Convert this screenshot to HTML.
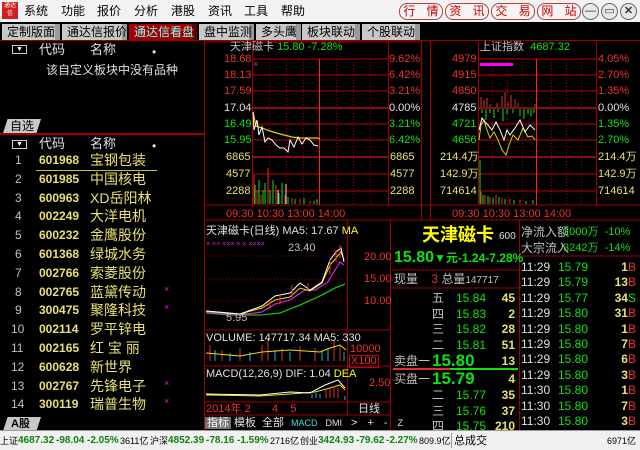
<!DOCTYPE html><html><head><meta charset="utf-8"><style>
*{margin:0;padding:0;box-sizing:border-box}
body{width:640px;height:450px;background:#000;position:relative;overflow:hidden;font-family:"Liberation Sans","Noto Sans CJK SC",sans-serif;font-size:12px}
.a{position:absolute;white-space:nowrap;line-height:1}
.r{color:#f03030}.g{color:#10e010}.w{color:#e0e0e0}.y{color:#e8e070}.yy{color:#ffff00}.gr{color:#c0c0c0}
.tab{position:absolute;top:24px;height:16px;background:#c8c8c8;color:#000;font-size:12px;line-height:16px;padding:0 5px;border-right:5px solid #9a9a9a;white-space:nowrap}
.rb{position:absolute;top:3px;height:17px;border:1px solid #b04040;border-radius:8px;background:#f4f4f4;color:#d00000;font-size:12px;line-height:15px;text-align:center;white-space:nowrap;word-spacing:8px}
.cb{position:absolute;top:3px;width:17px;height:17px;border-radius:50%;border:1px solid #666;background:#e8e8e8;color:#333;font-size:11px;line-height:15px;text-align:center}
.sb{position:absolute;top:4px;line-height:12px;font-size:10px;color:#000;white-space:nowrap}
.sg{position:absolute;top:4px;line-height:12px;font-size:10px;color:#108010;white-space:nowrap;font-weight:bold}
</style></head><body>
<div class="a" style="left:0;top:0;width:640px;height:22px;background:#f2f2f2"></div>
<div class="a" style="left:2px;top:2px;width:16px;height:17px;background:#d02020;color:#fff;font-size:6px;line-height:8px;text-align:center">通达<br>信</div>
<div class="a" style="left:24px;top:5px;color:#000">系统</div>
<div class="a" style="left:61px;top:5px;color:#000">功能</div>
<div class="a" style="left:97px;top:5px;color:#000">报价</div>
<div class="a" style="left:134px;top:5px;color:#000">分析</div>
<div class="a" style="left:171px;top:5px;color:#000">港股</div>
<div class="a" style="left:208px;top:5px;color:#000">资讯</div>
<div class="a" style="left:244px;top:5px;color:#000">工具</div>
<div class="a" style="left:281px;top:5px;color:#000">帮助</div>
<div class="rb" style="left:399px;width:44px">行 情</div>
<div class="rb" style="left:445px;width:44px">资 讯</div>
<div class="rb" style="left:491px;width:44px">交 易</div>
<div class="rb" style="left:537px;width:44px">网 站</div>
<div class="cb" style="left:582px">—</div><div class="cb" style="left:601px">▭</div><div class="cb" style="left:620px;font-weight:bold">✕</div>
<div class="tab" style="left:2px;width:58px">定制版面</div>
<div class="tab" style="left:62px;width:65px">通达信报价</div>
<div class="tab" style="left:129px;width:68px;background:#a00000;color:#80ffff;border-right-color:#600">通达信看盘</div>
<div class="tab" style="left:199px;width:55px">盘中监测</div>
<div class="tab" style="left:256px;width:45px">多头鹰</div>
<div class="tab" style="left:302px;width:58px">板块联动</div>
<div class="tab" style="left:362px;width:58px">个股联动</div>
<div class="a" style="left:0;top:40px;width:640px;height:1px;background:#a00000"></div>
<div class="a" style="left:204px;top:40px;width:1px;height:390px;background:#a00000"></div>
<div class="a" style="left:12px;top:45px;width:15px;height:9px;border:1px solid #ccc;color:#fff;font-size:7px;text-align:center;line-height:8px">▼</div>
<div class="a w" style="left:39px;top:43px;font-size:13px">代码</div>
<div class="a w" style="left:90px;top:43px;font-size:13px">名称</div>
<div class="a w" style="left:152px;top:46px">•</div>
<div class="a w" style="left:46px;top:64px">该自定义板块中没有品种</div>
<div class="a" style="left:3px;top:119px;width:38px;height:14px;background:#c8c8c8;color:#000;font-size:12px;line-height:14px;padding-left:7px;clip-path:polygon(12% 0,100% 0,88% 100%,0 100%)">自选</div>
<div class="a" style="left:0;top:133px;width:204px;height:2px;background:#a00000"></div>
<div class="a" style="left:12px;top:140px;width:15px;height:9px;border:1px solid #ccc;color:#fff;font-size:7px;text-align:center;line-height:8px">▼</div>
<div class="a w" style="left:39px;top:137px;font-size:13px">代码</div>
<div class="a w" style="left:90px;top:137px;font-size:13px">名称</div>
<div class="a w" style="left:152px;top:140px">•</div>
<div class="a" style="left:36px;top:170px;width:121px;height:1px;background:#c0c040"></div>
<div id="list"></div>
<div class="a" style="left:3px;top:417px;width:38px;height:14px;background:#c8c8c8;color:#000;font-size:11px;line-height:14px;padding-left:8px;clip-path:polygon(12% 0,100% 0,88% 100%,0 100%);font-weight:bold">A股</div>
<script>
var L=[["601968","宝钢包装"],["601985","中国核电"],["600963","XD岳阳林"],["002249","大洋电机"],["600232","金鹰股份"],["601368","绿城水务"],["002766","索菱股份"],["002765","蓝黛传动",1],["300475","聚隆科技",1],["002114","罗平锌电"],["002165","红 宝 丽"],["600628","新世界"],["002767","先锋电子",1],["300119","瑞普生物",1]];
var h="";L.forEach(function(r,i){var y=154+i*18.8;h+='<div class="a gr" style="left:'+(i<9?15:11)+'px;top:'+y+'px;font-size:12px">'+(i+1)+'</div><div class="a y" style="left:39px;top:'+y+'px;font-weight:bold;font-size:12px">'+r[0]+'</div><div class="a y" style="left:90px;top:'+(y-1)+'px;font-size:14px">'+r[1]+'</div>'+(r[2]?'<div class="a" style="left:164px;top:'+(y-1)+'px;color:#e020e0;font-size:9px">×</div>':'')});
document.getElementById("list").innerHTML=h;
</script>
<svg class="a" style="left:0;top:0" width="640" height="450">
<g stroke="#a00000" fill="none">
<line x1="205" y1="42" x2="420" y2="42"/><line x1="205" y1="205" x2="640" y2="205"/><line x1="205" y1="220" x2="640" y2="220"/>
<line x1="252.5" y1="42" x2="252.5" y2="205"/><line x1="388.5" y1="42" x2="388.5" y2="205"/><line x1="421.5" y1="40" x2="421.5" y2="220"/><line x1="430.5" y1="40" x2="430.5" y2="220"/>
<line x1="478.5" y1="42" x2="478.5" y2="205"/><line x1="596.5" y1="42" x2="596.5" y2="205"/>
</g>
<g stroke="#c00000">
<line x1="252" y1="59" x2="388" y2="59"/><line x1="252" y1="75" x2="388" y2="75"/><line x1="252" y1="91" x2="388" y2="91"/><line x1="252" y1="108" x2="388" y2="108" stroke="#ff2020"/><line x1="252" y1="124" x2="388" y2="124"/><line x1="252" y1="140" x2="388" y2="140"/><line x1="252" y1="157" x2="388" y2="157" stroke="#ff2020"/><line x1="252" y1="174" x2="388" y2="174"/><line x1="252" y1="191" x2="388" y2="191"/>
<line x1="478" y1="59" x2="596" y2="59"/><line x1="478" y1="75" x2="596" y2="75"/><line x1="478" y1="91" x2="596" y2="91"/><line x1="478" y1="108" x2="596" y2="108" stroke="#ff2020"/><line x1="478" y1="124" x2="596" y2="124"/><line x1="478" y1="140" x2="596" y2="140"/><line x1="478" y1="157" x2="596" y2="157" stroke="#ff2020"/><line x1="478" y1="174" x2="596" y2="174"/><line x1="478" y1="191" x2="596" y2="191"/>
<line x1="319.5" y1="59" x2="319.5" y2="205" stroke="#ff2020"/><line x1="536.5" y1="59" x2="536.5" y2="205" stroke="#ff2020"/>
</g>
<g stroke="#a00000" stroke-dasharray="1,2">
<line x1="269.5" y1="59" x2="269.5" y2="205"/><line x1="286.5" y1="59" x2="286.5" y2="205"/><line x1="303.5" y1="59" x2="303.5" y2="205"/><line x1="336.5" y1="59" x2="336.5" y2="205"/><line x1="353.5" y1="59" x2="353.5" y2="205"/><line x1="370.5" y1="59" x2="370.5" y2="205"/>
<line x1="492.5" y1="59" x2="492.5" y2="205"/><line x1="507.5" y1="59" x2="507.5" y2="205"/><line x1="522.5" y1="59" x2="522.5" y2="205"/><line x1="551.5" y1="59" x2="551.5" y2="205"/><line x1="566.5" y1="59" x2="566.5" y2="205"/><line x1="581.5" y1="59" x2="581.5" y2="205"/>
</g>
<polyline fill="none" stroke="#e0d000" stroke-width="1.2" points="253,112 256,126 262,128 270,131 280,134 292,137 300,138 318,138 320,139"/>
<polyline fill="none" stroke="#fff" points="253,112 254,130 257,120 259,135 262,127 265,142 268,138 272,140 276,145 280,148 284,148 288,152 290,140 294,147 298,137 302,144 306,138 310,140 314,145 318,146"/>
<path stroke="#e03030" d="M254,175V204M257,190V204M261,195V204M268,168V204M276,185V204M285,195V204M292,198V204M300,199V204M310,201V204"/>
<path stroke="#10e010" d="M255,185V204M259,180V204M263,190V204M265,183V204M270,190V204M273,180V204M279,193V204M282,183V204M288,197V204M295,199V204M304,198V204M314,201V204M317,199V204"/>
<path stroke="#ddd" d="M286,184V204M278,190V204"/>
<rect x="480" y="63" width="33" height="3" fill="#f0f"/>
<path stroke="#e03030" d="M481,97V107M484,100V107M487,98V107M490,104V107M497,103V107M502,96V107M505,92V107M508,102V107M511,95V107M515,99V107M518,103V107M535,104V107"/>
<path stroke="#10e010" d="M482,109V113M486,109V120M490,109V113M494,109V118M498,109V112M503,109V121M507,109V114M513,109V113M520,109V116M524,109V119M528,109V114M531,109V116M534,109V113"/>
<polyline fill="none" stroke="#e0d000" points="479,140 481,125 484,120 487,130 490,138 494,132 498,140 502,150 506,155 509,145 513,135 518,140 523,128 528,137 532,136 535,140"/>
<polyline fill="none" stroke="#fff" points="479,130 482,118 485,122 488,125 492,130 496,122 500,130 504,140 507,130 510,135 515,128 520,120 525,132 530,125 535,130"/>
<path stroke="#10e010" d="M480,160V204"/>
<path stroke="#e03030" d="M481,192V204M485,195V204M490,197V204M496,195V204M502,198V204M510,199V204M520,200V204"/>
<path stroke="#10e010" d="M483,195V204M488,196V204M493,198V204M499,197V204M505,199V204M514,200V204M526,201V204M533,200V204"/>
<g stroke="#a00000" fill="none">
<line x1="347.5" y1="220" x2="347.5" y2="415"/><line x1="390.5" y1="220" x2="390.5" y2="430"/><line x1="519.5" y1="220" x2="519.5" y2="430"/>
<line x1="205" y1="330" x2="390" y2="330"/><line x1="205" y1="366" x2="390" y2="366"/><line x1="205" y1="402" x2="390" y2="402"/><line x1="205" y1="415" x2="390" y2="415"/>
<line x1="520" y1="256" x2="640" y2="256"/><line x1="391" y1="270" x2="519" y2="270"/><line x1="391" y1="288" x2="519" y2="288"/>
</g>
<g stroke="#a00000" stroke-dasharray="1,2"><line x1="205" y1="256" x2="347" y2="256"/><line x1="205" y1="279" x2="347" y2="279"/><line x1="205" y1="301" x2="347" y2="301"/></g>
<line x1="393" y1="369" x2="450" y2="369" stroke="#e03030" stroke-width="2"/><line x1="450" y1="369" x2="518" y2="369" stroke="#10e010" stroke-width="2"/>
<polyline fill="none" stroke="#10c010" stroke-width="1.3" points="206,313 230,315 260,315 280,313 300,305 320,296 335,288 345,284"/>
<polyline fill="none" stroke="#e020e0" stroke-width="1.2" points="206,312 240,315 262,312 275,304 290,300 305,290 315,290 328,282 335,270 340,262 344,265"/>
<polyline fill="none" stroke="#f0e000" points="206,311 240,314 262,308 275,300 290,297 300,288 310,291 322,283 330,265 336,258 341,252 344,260"/>
<polyline fill="none" stroke="#fff" points="206,311 240,314 262,306 275,296 290,293 300,283 310,290 322,282 330,260 336,252 341,248 344,262"/>
<path stroke="#e03030" d="M270,300V309M280,294V304M292,285V297M308,283V290M330,260V275M336,250V262M340,245V258"/>
<g fill="#e020e0" font-size="7"><text x="206" y="246">× ××  ×××   × ×  ××××</text></g>
<path stroke="#e03030" d="M210,345V361M222,350V361M240,348V361M262,345V361M268,339V361M282,348V361M300,346V361M315,348V361M334,340V361M340,345V361"/>
<path stroke="#29b0e0" d="M215,350V361M230,353V361M250,352V361M275,350V361M290,352V361M322,351V361M328,348V361M344,352V361"/>
<polyline fill="none" stroke="#f0e000" points="206,353 240,356 262,352 290,350 320,352 330,348 340,345 346,350"/>
<polyline fill="none" stroke="#f0e000" points="206,395 260,396 290,394 315,392 330,388 340,385 345,390"/>
<polyline fill="none" stroke="#fff" points="206,394 260,395 290,392 310,393 325,385 338,380 345,388"/>
<path stroke="#e03030" d="M326,390V398M330,388V398M334,386V398M338,388V398"/>
<path stroke="#29b0e0" d="M312,394V398M316,393V398M320,394V398M345,396V400"/>
<g stroke="#a00000"><line x1="205" y1="429" x2="390" y2="429"/></g>
</svg>
<div class="a gr" style="left:230px;top:42px;font-size:11px">天津磁卡 <span class="g">15.80 -7.28%</span></div>
<div class="a r" style="left:224px;top:54px;font-size:11px">18.68</div><div class="a r" style="left:224px;top:70px;font-size:11px">18.13</div><div class="a r" style="left:224px;top:86px;font-size:11px">17.59</div><div class="a w" style="left:224px;top:103px;font-size:11px">17.04</div><div class="a g" style="left:224px;top:119px;font-size:11px">16.49</div><div class="a g" style="left:224px;top:135px;font-size:11px">15.95</div>
<div class="a y" style="left:226px;top:152px;font-size:11px">6865</div><div class="a y" style="left:226px;top:169px;font-size:11px">4577</div><div class="a y" style="left:226px;top:186px;font-size:11px">2288</div>
<div class="a r" style="left:389px;top:54px;font-size:11px">9.62%</div><div class="a r" style="left:389px;top:70px;font-size:11px">6.42%</div><div class="a r" style="left:389px;top:86px;font-size:11px">3.21%</div><div class="a w" style="left:389px;top:103px;font-size:11px">0.00%</div><div class="a g" style="left:389px;top:119px;font-size:11px">3.21%</div><div class="a g" style="left:389px;top:135px;font-size:11px">6.42%</div>
<div class="a y" style="left:390px;top:152px;font-size:11px">6865</div><div class="a y" style="left:390px;top:169px;font-size:11px">4577</div><div class="a y" style="left:390px;top:186px;font-size:11px">2288</div>
<div class="a" style="left:253px;top:60px;color:#e020e0;font-size:9px">×</div>
<div class="a r" style="left:226px;top:209px;font-size:11px">09:30 10:30 13:00 14:00</div>
<div class="a gr" style="left:480px;top:42px;font-size:11px">上证指数 &nbsp;<span class="g">4687.32</span></div>
<div class="a r" style="left:452px;top:54px;font-size:11px">4979</div><div class="a r" style="left:452px;top:70px;font-size:11px">4915</div><div class="a r" style="left:452px;top:86px;font-size:11px">4850</div><div class="a w" style="left:452px;top:103px;font-size:11px">4785</div><div class="a g" style="left:452px;top:119px;font-size:11px">4721</div><div class="a g" style="left:452px;top:135px;font-size:11px">4656</div>
<div class="a y" style="left:440px;top:152px;font-size:11px">214.4万</div><div class="a y" style="left:440px;top:169px;font-size:11px">142.9万</div><div class="a y" style="left:440px;top:186px;font-size:11px">714614</div>
<div class="a r" style="left:598px;top:54px;font-size:11px">4.05%</div><div class="a r" style="left:598px;top:70px;font-size:11px">2.70%</div><div class="a r" style="left:598px;top:86px;font-size:11px">1.35%</div><div class="a w" style="left:598px;top:103px;font-size:11px">0.00%</div><div class="a g" style="left:598px;top:119px;font-size:11px">1.35%</div><div class="a g" style="left:598px;top:135px;font-size:11px">2.70%</div>
<div class="a y" style="left:598px;top:152px;font-size:11px">214.4万</div><div class="a y" style="left:598px;top:169px;font-size:11px">142.9万</div><div class="a y" style="left:598px;top:186px;font-size:11px">714614</div>
<div class="a r" style="left:452px;top:209px;font-size:11px">09:30 10:30 13:00 14:00</div>
<div class="a w" style="left:206px;top:226px;font-size:11px">天津磁卡(日线) MA5: 17.67 <span class="yy">MA</span></div>
<div class="a gr" style="left:288px;top:243px;font-size:11px">23.40</div>
<div class="a gr" style="left:226px;top:313px;font-size:11px">5.95</div>
<div class="a r" style="left:364px;top:252px;font-size:11px">20.00</div><div class="a r" style="left:364px;top:274px;font-size:11px">15.00</div><div class="a r" style="left:364px;top:296px;font-size:11px">10.00</div>
<div class="a w" style="left:206px;top:333px;font-size:11px">VOLUME: 147717.34 MA5: 330</div>
<div class="a r" style="left:350px;top:344px;font-size:11px">10000</div>
<div class="a r" style="left:349px;top:355px;font-size:11px;border:1px solid #c00;padding:0 1px">X100</div>
<div class="a w" style="left:206px;top:369px;font-size:11px">MACD(12,26,9) DIF: 1.04 <span class="yy">DEA</span></div>
<div class="a r" style="left:369px;top:378px;font-size:11px">2.50</div>
<div class="a r" style="left:206px;top:404px;font-size:11px">2014年 2 &nbsp;&nbsp;&nbsp;&nbsp;&nbsp;&nbsp;4 &nbsp;&nbsp;&nbsp;5</div>
<div class="a w" style="left:358px;top:404px;font-size:11px">日线</div>
<div class="a" style="left:205px;top:416px;width:185px;height:14px;background:#000;font-size:11px;line-height:14px">
<span style="background:#707070;color:#fff;padding:0 2px">指标</span><span class="w" style="padding:0 3px">模板</span><span class="w" style="padding:0 3px">全部</span><span style="color:#30e0e0;font-size:9px;padding:0 4px">MACD</span><span class="w" style="font-size:9px;padding:0 4px">DMI</span><span class="w" style="padding:0 5px">&gt;</span><span class="w" style="padding:0 5px">+</span><span class="w" style="padding:0 5px">-</span><span class="w" style="padding:0 5px;font-size:9px">Z</span></div>
<div class="a" style="left:422px;top:226px;color:#ffff00;font-size:18px;font-weight:bold">天津磁卡</div>
<div class="a w" style="left:499px;top:232px;font-size:10px">600</div>
<div class="a g" style="left:394px;top:250px;font-size:16px;font-weight:bold">15.80<span style="font-size:12px">▼元-1.24-7.28%</span></div>
<div class="a gr" style="left:394px;top:273px;font-size:12px">现量 &nbsp;&nbsp;&nbsp;<span class="r">3</span> 总量<span style="font-size:10px">147717</span></div>
<div id="q"></div>
<script>
var q=[["五","15.84","45",292],["四","15.83","2",308],["三","15.82","28",323],["二","15.81","51",339]];var s="";
q.forEach(function(r){s+='<div class="a gr" style="left:432px;top:'+r[3]+'px">'+r[0]+'</div><div class="a g" style="left:456px;top:'+r[3]+'px">'+r[1]+'</div><div class="a y" style="right:125px;top:'+r[3]+'px;font-weight:bold">'+r[2]+'</div>'});
s+='<div class="a gr" style="left:394px;top:355px">卖盘一</div><div class="a g" style="left:432px;top:352px;font-size:17px;font-weight:bold">15.80</div><div class="a y" style="right:125px;top:355px;font-weight:bold">13</div>';
s+='<div class="a gr" style="left:394px;top:373px">买盘一</div><div class="a g" style="left:432px;top:370px;font-size:17px;font-weight:bold">15.79</div><div class="a y" style="right:125px;top:373px;font-weight:bold">4</div>';
[["二","15.77","35",389],["三","15.76","37",405],["四","15.75","210",420]].forEach(function(r){s+='<div class="a gr" style="left:432px;top:'+r[3]+'px">'+r[0]+'</div><div class="a g" style="left:456px;top:'+r[3]+'px">'+r[1]+'</div><div class="a y" style="right:125px;top:'+r[3]+'px;font-weight:bold">'+r[2]+'</div>'});
s+='<div class="a gr" style="left:521px;top:226px">净流入额</div><div class="a g" style="left:563px;top:227px;font-size:11px">2000万 &nbsp;-10%</div>';
s+='<div class="a gr" style="left:521px;top:242px">大宗流入</div><div class="a g" style="left:563px;top:243px;font-size:11px">3242万 &nbsp;-14%</div>';
var t=[["11:29","15.79","1B"],["11:29","15.79","13B"],["11:29","15.77","34S"],["11:29","15.80","31B"],["11:29","15.80","1B"],["11:29","15.80","7B"],["11:29","15.80","6B"],["11:29","15.80","3B"],["11:30","15.80","1B"],["11:30","15.80","7B"],["11:30","15.80","3B"]];
t.forEach(function(r,i){var y=261+i*15.4;var n=r[2].slice(0,-1),c=r[2].slice(-1);s+='<div class="a w" style="left:521px;top:'+y+'px">'+r[0]+'</div><div class="a g" style="left:558px;top:'+y+'px">'+r[1]+'</div><div class="a" style="right:4px;top:'+y+'px"><span class="y" style="font-weight:bold">'+n+'</span><span style="color:'+(c=="S"?"#10e010":"#f03030")+'">'+c+'</span></div>'});
document.getElementById("q").innerHTML=s;
</script>
<div style="position:absolute;left:0;top:430px;width:640px;height:20px;background:#f0f0f0;border-top:1px solid #999">
<span class="sb" style="left:0;font-size:9px">上证</span><span class="sg" style="left:18px">4687.32</span><span class="sg" style="left:56px">-98.04</span><span class="sg" style="left:87px">-2.05%</span><span class="sb" style="left:120px;font-size:9px">3611亿</span>
<span class="sb" style="left:150px;font-size:9px">沪深</span><span class="sg" style="left:168px">4852.39</span><span class="sg" style="left:206px">-78.16</span><span class="sg" style="left:237px">-1.59%</span><span class="sb" style="left:270px;font-size:9px">2716亿</span>
<span class="sb" style="left:300px;font-size:9px">创业</span><span class="sg" style="left:318px">3424.93</span><span class="sg" style="left:356px">-79.62</span><span class="sg" style="left:386px">-2.27%</span><span class="sb" style="left:419px;font-size:9px">809.9亿</span>
<span style="position:absolute;left:451px;top:2px;width:1px;height:15px;background:#999"></span>
<span class="sb" style="left:454px;font-size:11px">总成交</span><span class="sb" style="left:607px;font-size:9px">6971亿</span></div>
</body></html>
